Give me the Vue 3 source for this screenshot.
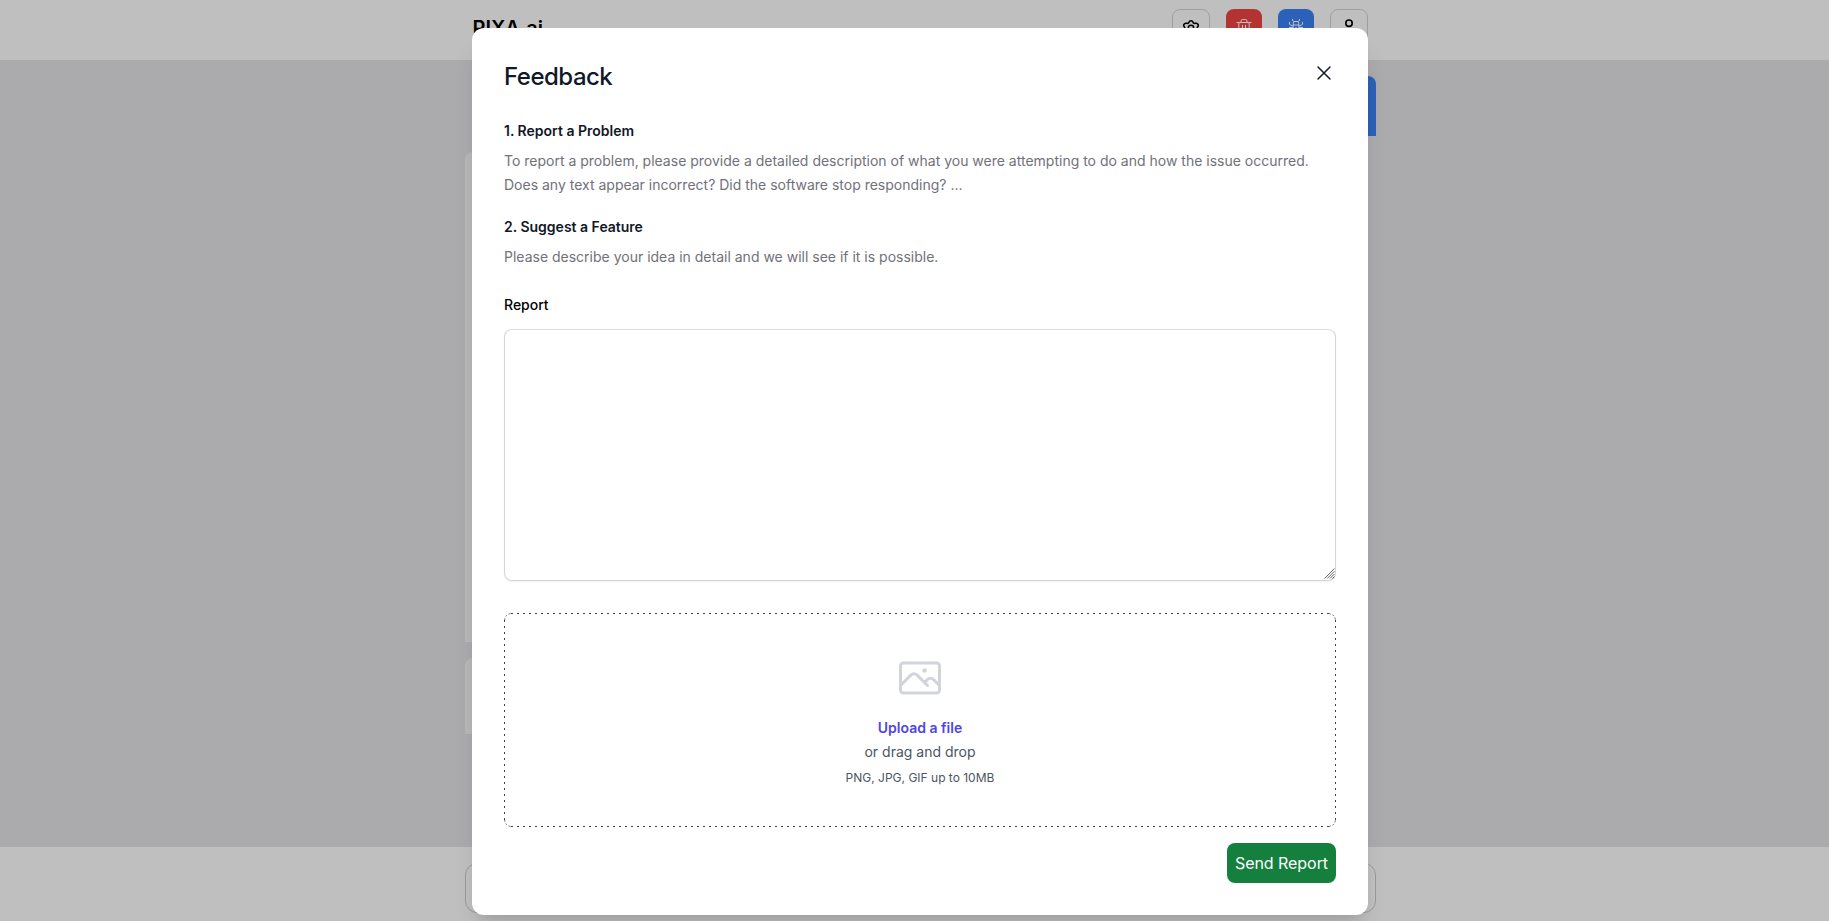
<script setup>
import { ref } from 'vue'
const report = ref('')
</script>

<template>
  <div class="page">
    <header class="header">
      <div class="bar">
        <div class="brand">PIXA.ai</div>
        <nav class="actions">
          <button class="tool outline" aria-label="Settings">
            <svg viewBox="0 0 36 36" width="36" height="36" fill="none" stroke="currentColor" stroke-width="1.5" stroke-linecap="round" stroke-linejoin="round">
              <path d="M15.700 12.800L16.300 11.600Q18 9.800 19.700 11.600L20.300 12.800Q21 13.600 22 13.300L23.500 13.200Q25.800 14 25.200 16.200L24.300 17.300Q23.900 18 24.300 18.700L25.200 19.800Q25.800 22 23.500 22.800L22 22.700Q21 22.400 20.300 23.200L19.700 24.400Q18 26.200 16.300 24.400L15.700 23.200Q15 22.400 14 22.700L12.500 22.800Q10.200 22 10.800 19.800L11.700 18.700Q12.100 18 11.700 17.300L10.800 16.200Q10.200 14 12.500 13.200L14 13.300Q15 13.600 15.700 12.800Z" />
              <circle cx="18" cy="18" r="2.700" />
            </svg>
          </button>
          <button class="tool red" aria-label="Delete">
            <svg viewBox="0 0 36 36" width="36" height="36" fill="none" stroke="currentColor" stroke-width="1">
              <path d="M15 13.500V12q0-1.500 1.500-1.500h3q1.500 0 1.500 1.500v1.500M10.500 13.500h15M12.800 13.500v10q0 2 2 2h6.400q2 0 2-2v-10M16.500 16v6.500M19.500 16v6.500" />
            </svg>
          </button>
          <button class="tool blue" aria-label="Report a bug">
            <svg viewBox="0 0 36 36" width="36" height="36" fill="none" stroke="currentColor" stroke-width="1">
              <path d="M14.500 10v1.500l1.500 1h4l1.500-1V10M16 12.500q-1 1.500-.8 3.500h5.600q.2-2-.8-3.500M11.500 13v2q0 1 1 1l3 1M24.500 13v2q0 1-1 1l-3 1M15 16v5q0 4 3 4t3-4v-5M11 18.500h4M21 18.500h4M15 21q-3 0-3 3M21 21q3 0 3 3M18 18v6" />
            </svg>
          </button>
          <button class="tool outline" aria-label="Account">
            <svg viewBox="0 0 36 36" width="36" height="36" fill="none" stroke="currentColor" stroke-width="1.600">
              <circle cx="18" cy="13.200" r="3.200" />
              <path d="M11.500 25v-1.500a4 4 0 0 1 4-4h5a4 4 0 0 1 4 4V25" />
            </svg>
          </button>
        </nav>
      </div>
    </header>
    <main class="chat">
      <div class="bubble sent"></div>
      <div class="bubble answer"></div>
      <div class="bubble reply"></div>
    </main>
    <footer class="footer"><div class="prompt"></div></footer>

    <div class="overlay">
      <section class="modal" role="dialog">
        <div class="top">
          <h2>Feedback</h2>
          <button class="close" aria-label="Close">
            <svg viewBox="0 0 24 24" width="24" height="24" fill="none" stroke="currentColor" stroke-width="1.5" stroke-linecap="round" stroke-linejoin="round"><path d="M6 18L18 6M6 6l12 12" /></svg>
          </button>
        </div>
        <div class="topic">
          <h3>1. Report a Problem</h3>
          <p>To report a problem, please provide a detailed description of what you were attempting to do and how the issue occurred. Does any text appear incorrect? Did the software stop responding? ...</p>
        </div>
        <div class="topic">
          <h3>2. Suggest a Feature</h3>
          <p>Please describe your idea in detail and we will see if it is possible.</p>
        </div>
        <label class="label" for="report">Report</label>
        <div class="field">
          <textarea id="report" v-model="report" rows="10"></textarea>
          <svg class="grip" viewBox="0 0 11 11" width="11" height="11" fill="none" stroke="#52525b" stroke-width="0.900">
            <path d="M0.500 10.500L10.500 0.500M3.200 10.500L10.500 3.200M5.900 10.500L10.500 5.900M8.500 10.500L10.500 8.500" />
          </svg>
        </div>
        <div class="drop">
          <svg class="dashes" viewBox="0 0 832 214" width="832" height="214" fill="none" stroke="#3f3f46" stroke-dasharray="2 4">
            <path d="M7 0.500H826M7 213.500H826M0.500 7V208M831.500 7V208" />
            <path class="corners" d="M0.500 7.500Q1 1 7.500 0.500M824.500 0.500Q831 1 831.500 7.500M0.500 206.500Q1 213 7.500 213.500M824.500 213.500Q831 213 831.500 206.500" />
          </svg>
          <svg viewBox="0 0 24 24" width="48" height="48" fill="none" stroke="currentColor" stroke-width="1.5" stroke-linecap="round" stroke-linejoin="round">
            <path d="m2.25 15.75 5.159-5.159a2.25 2.25 0 0 1 3.182 0l5.159 5.159m-1.5-1.5 1.409-1.409a2.25 2.25 0 0 1 3.182 0l2.909 2.909m-18 3.75h16.5a1.5 1.5 0 0 0 1.5-1.5V6a1.5 1.5 0 0 0-1.5-1.5H3.75A1.5 1.5 0 0 0 2.25 6v12a1.5 1.5 0 0 0 1.5 1.5Zm10.5-11.25h.008v.008h-.008V8.25Zm.375 0a.375.375 0 1 1-.75 0 .375.375 0 0 1 .75 0Z" />
          </svg>
          <span class="upload">Upload a file</span>
          <span class="or">or drag and drop</span>
          <span class="hint">PNG, JPG, GIF up to 10MB</span>
        </div>
        <div class="bottom"><button class="send">Send Report</button></div>
      </section>
    </div>
  </div>
</template>

<style>
body { margin: 0; overflow: hidden; }
</style>

<style scoped>
* { box-sizing: border-box; }
h2, h3, p { margin: 0; }
button { border: 0; padding: 0; font: inherit; background: none; }
svg { display: block; flex: none; }
.page {
  position: relative;
  display: flex;
  flex-direction: column;
  height: 100vh;
  overflow: hidden;
  font-family: Inter, "Liberation Sans", sans-serif;
  font-size: 16px;
  line-height: 24px;
  color: #000;
}
.header { flex: none; height: 60px; padding: 9px 461px 0 472px; background: #fff; }
.bar { display: flex; justify-content: space-between; }
.brand { padding: 5px 0 0 0.5px; font-size: 20px; font-weight: 600; line-height: 28px; }
.actions { display: flex; gap: 16px; }
.tool { display: flex; align-items: center; justify-content: center; width: 36px; height: 36px; border-radius: 8px; color: #fff; }
.outline { width: 38px; height: 38px; border: 1px solid #d1d5db; color: #000; }
.red { background: #ef4444; }
.blue { background: #3b82f6; }
.chat {
  flex: 1;
  display: flex;
  flex-direction: column;
  gap: 16px;
  padding: 16px 453px 0 465px;
  background: #e4e4e7;
}
.bubble { flex: none; }
.sent { align-self: flex-end; width: 400px; height: 60px; border-radius: 8px 8px 0 8px; background: #3b82f6; }
.answer { width: 850px; height: 490px; border-radius: 8px 8px 8px 0; background: #f4f4f5; }
.reply { width: 850px; height: 76px; border-radius: 8px 8px 8px 0; background: #f4f4f5; }
.footer { flex: none; height: 74px; padding: 16px 453px 0 465px; background: #fff; }
.prompt { height: 50px; border: 1px solid #c9ccd2; border-radius: 12px; }
.overlay {
  position: absolute;
  inset: 0;
  padding: 28px 0 0 11px;
  background: rgba(0, 0, 0, 0.25);
}
.modal {
  width: 896px;
  height: 887px;
  margin: 0 auto;
  padding: 32px;
  border-radius: 12px;
  background: #fff;
  box-shadow: 0 20px 25px -5px rgba(0, 0, 0, 0.1), 0 8px 10px -6px rgba(0, 0, 0, 0.1);
}
.top { display: flex; justify-content: space-between; height: 59px; padding-top: 1px; }
h2 { font-size: 24px; line-height: 32px; font-weight: 500; letter-spacing: -0.5px; color: #111827; }
.close { align-self: flex-start; height: 24px; color: #111827; }
h3 { font-size: 14px; line-height: 24px; font-weight: 600; color: #111827; }
.topic { margin-bottom: 18px; }
.topic p { margin-top: 6px; font-size: 14px; line-height: 24px; color: #71717a; }
.label { display: block; margin-top: 24px; font-size: 14px; line-height: 24px; font-weight: 500; }
.field { position: relative; margin-top: 12px; }
textarea {
  display: block;
  width: 100%;
  height: 252px;
  padding: 6px 12px;
  border: 1px solid #d4d4d8;
  border-top-color: #dedee0;
  border-radius: 8px;
  background: #fff;
  font: inherit;
  resize: none;
  box-shadow: 0 1px 2px rgba(0, 0, 0, 0.05);
}
.grip { position: absolute; right: 1px; bottom: 2px; }
.drop {
  position: relative;
  display: flex;
  flex-direction: column;
  align-items: center;
  height: 214px;
  margin-top: 32px;
  padding-top: 41px;
  color: #d1d5db;
}
.dashes { position: absolute; inset: 0; }
.corners { stroke-dasharray: 2 2; stroke-width: 0.8; }
.upload { margin-top: 14px; font-size: 14px; font-weight: 600; color: #4f46e5; }
.or { font-size: 14px; color: #4b5563; }
.hint { margin-top: 2px; font-size: 12px; color: #4b5563; }
.bottom { display: flex; justify-content: flex-end; margin-top: 16px; }
.send { width: 109px; height: 40px; border-radius: 8px; background: #15803d; color: #fff; white-space: nowrap; letter-spacing: -0.05px; }
</style>
